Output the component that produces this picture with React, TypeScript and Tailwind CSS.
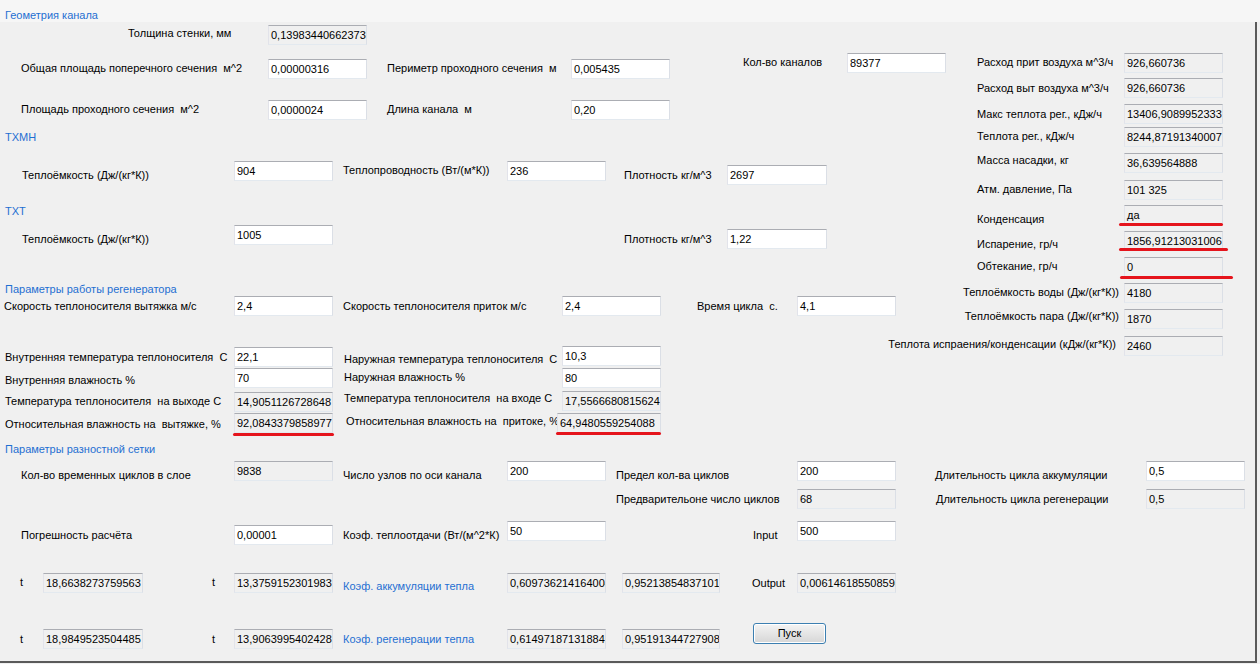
import React from "react";

function Box({ v, ro, cls, children }: { v: string; ro?: boolean; cls?: string; children?: React.ReactNode }) {
  return (
    <div
      className={`${cls ?? ""} relative h-[20px] shrink-0 border border-[#dbdfe6] border-t-[#abadb3] border-l-[#e2e3ea] border-b-[#e3e9ef] ${
        ro ? "bg-[#f0f0f0]" : "bg-white"
      }`}
    >
      <div className="overflow-hidden whitespace-nowrap pl-[2px] leading-[18px] h-[18px]">{v}</div>
      {children}
    </div>
  );
}

function L({ cls, children, blue }: { cls: string; children: React.ReactNode; blue?: boolean }) {
  return (
    <div className={`${cls} shrink-0 whitespace-pre leading-[13px] h-[13px] ${blue ? "text-[#1f6fd2]" : ""}`}>
      {children}
    </div>
  );
}

function Red({ cls }: { cls: string }) {
  return <div className={`${cls} absolute h-[3px] rounded-full bg-[#e5141c]`} />;
}

function RLeft({ h, lt, label, v, children }: { h: string; lt: string; label: string; v: string; children?: React.ReactNode }) {
  return (
    <div className={`${h} flex shrink-0`}>
      <L cls={`w-[167px] pl-[20px] ${lt}`}>{label}</L>
      <Box ro cls="w-[99px]" v={v}>
        {children}
      </Box>
    </div>
  );
}

function RRight({ h, lt, pr, label, v }: { h: string; lt: string; pr: string; label: string; v: string }) {
  return (
    <div className={`${h} flex shrink-0`}>
      <div className={`w-[167px] shrink-0 flex justify-end ${pr} ${lt}`}>
        <div className="shrink-0 whitespace-pre leading-[13px] h-[13px]">{label}</div>
      </div>
      <Box ro cls="w-[99px]" v={v} />
    </div>
  );
}

export default function App() {
  return (
    <div className="relative w-[1260px] h-[664px] overflow-hidden bg-[#f0f0f0] text-black text-[11px] leading-[13px] font-['Liberation_Sans','Arial',sans-serif]">
      {/* top band */}
      <div className="h-[22px] bg-[#f6f6f6] pl-[5px] pt-[9px]">
        <L blue cls="">Геометрия канала</L>
      </div>

      <div className="flex">
        {/* left part */}
        <div className="w-[957px] shrink-0 flex flex-col">
          <div className="flex h-[30px] shrink-0">
            <L cls="ml-[128px] w-[140px] mt-[5px]">Толщина стенки, мм</L>
            <Box ro cls="w-[99px] mt-[3px]" v="0,139834406623738" />
          </div>
          <div className="flex h-[48px] shrink-0">
            <L cls="ml-[21px] w-[247px] mt-[10px]">Общая площадь поперечного сечения  м^2</L>
            <Box cls="w-[99px] mt-[7px]" v="0,00000316" />
            <L cls="ml-[20px] w-[184px] mt-[10px]">Периметр проходного сечения  м</L>
            <Box cls="w-[99px] mt-[7px]" v="0,005435" />
            <L cls="ml-[73px] w-[104px] mt-[4px]">Кол-во каналов</L>
            <Box cls="w-[99px] mt-[1px]" v="89377" />
          </div>
          <div className="flex h-[28px] shrink-0">
            <L cls="ml-[21px] w-[247px] mt-[3px]">Площадь проходного сечения  м^2</L>
            <Box cls="w-[99px]" v="0,0000024" />
            <L cls="ml-[20px] w-[184px] mt-[3px]">Длина канала  м</L>
            <Box cls="w-[99px]" v="0,20" />
          </div>
          <div className="flex h-[27px] shrink-0">
            <L blue cls="ml-[5px] mt-[3px]">ТХМН</L>
          </div>
          <div className="flex h-[45px] shrink-0">
            <L cls="ml-[22px] w-[212px] mt-[14px]">Теплоёмкость (Дж/(кг*К))</L>
            <Box cls="w-[99px] mt-[6px]" v="904" />
            <L cls="ml-[10px] w-[164px] mt-[9px]">Теплопроводность (Вт/(м*К))</L>
            <Box cls="w-[99px] mt-[6px]" v="236" />
            <L cls="ml-[18px] w-[103px] mt-[14px]">Плотность кг/м^3</L>
            <Box cls="w-[100px] mt-[10px]" v="2697" />
          </div>
          <div className="flex h-[22px] shrink-0">
            <L blue cls="ml-[5px] mt-[5px]">ТХТ</L>
          </div>
          <div className="flex h-[38px] shrink-0">
            <L cls="ml-[22px] w-[212px] mt-[11px]">Теплоёмкость (Дж/(кг*К))</L>
            <Box cls="w-[99px] mt-[3px]" v="1005" />
            <L cls="ml-[291px] w-[103px] mt-[11px]">Плотность кг/м^3</L>
            <Box cls="w-[100px] mt-[7px]" v="1,22" />
          </div>
          <div className="flex h-[36px] shrink-0">
            <L blue cls="ml-[5px] mt-[23px]">Параметры работы регенератора</L>
          </div>
          <div className="flex h-[50px] shrink-0">
            <L cls="ml-[4px] w-[230px] mt-[4px]">Скорость теплоносителя вытяжка м/с</L>
            <Box cls="w-[99px]" v="2,4" />
            <L cls="ml-[10px] w-[219px] mt-[4px]">Скорость теплоносителя приток м/с</L>
            <Box cls="w-[99px]" v="2,4" />
            <L cls="ml-[36px] w-[100px] mt-[4px]">Время цикла  с.</L>
            <Box cls="w-[99px]" v="4,1" />
          </div>
          <div className="flex h-[22px] shrink-0">
            <L cls="ml-[5px] w-[229px] mt-[5px]">Внутренняя температура теплоносителя  С</L>
            <Box cls="w-[99px] mt-[1px]" v="22,1" />
            <L cls="ml-[11px] w-[218px] mt-[7px]">Наружная температура теплоносителя  С</L>
            <Box cls="w-[99px]" v="10,3" />
          </div>
          <div className="flex h-[23px] shrink-0">
            <L cls="ml-[5px] w-[229px] mt-[6px]">Внутренняя влажность %</L>
            <Box cls="w-[99px]" v="70" />
            <L cls="ml-[11px] w-[218px] mt-[3px]">Наружная влажность %</L>
            <Box cls="w-[99px]" v="80" />
          </div>
          <div className="flex h-[22px] shrink-0">
            <L cls="ml-[5px] w-[229px] mt-[4px]">Температура теплоносителя  на выходе С</L>
            <Box ro cls="w-[99px] mt-[1px]" v="14,9051126728648" />
            <L cls="ml-[11px] w-[218px] mt-[1px]">Температура теплоносителя  на входе С</L>
            <Box ro cls="w-[99px]" v="17,5566680815624" />
          </div>
          <div className="flex h-[27px] shrink-0">
            <L cls="ml-[5px] w-[229px] mt-[5px]">Относительная влажность на  вытяжке, %</L>
            <Box ro cls="w-[99px]" v="92,0843379858977">
              <Red cls="left-[-2px] top-[19px] w-[101px]" />
            </Box>
            <L cls="ml-[13px] w-[211px] mt-[2px]">Относительная влажность на  притоке, %</L>
            <Box ro cls="w-[104px]" v="64,9480559254088">
              <Red cls="left-[-2px] top-[18px] w-[105px]" />
            </Box>
          </div>
        </div>

        {/* right column */}
        <div className="w-[299px] shrink-0 flex flex-col">
          <div className="h-[31px] shrink-0" />
          <RLeft h="h-[25px]" lt="mt-[3px]" label="Расход прит воздуха м^3/ч" v="926,660736" />
          <RLeft h="h-[26px]" lt="mt-[4px]" label="Расход выт воздуха м^3/ч" v="926,660736" />
          <RLeft h="h-[23px]" lt="mt-[4px]" label="Макс теплота рег., кДж/ч" v="13406,9089952333" />
          <RLeft h="h-[26px]" lt="mt-[3px]" label="Теплота рег., кДж/ч" v="8244,87191340007" />
          <RLeft h="h-[27px]" lt="mt-[1px]" label="Масса насадки, кг" v="36,639564888" />
          <RLeft h="h-[25px]" lt="mt-[3px]" label="Атм. давление, Па" v="101 325" />
          <RLeft h="h-[26px]" lt="mt-[8px]" label="Конденсация" v="да">
            <Red cls="left-[-6px] top-[17px] w-[104px]" />
          </RLeft>
          <RLeft h="h-[26px]" lt="mt-[7px]" label="Испарение, гр/ч" v="1856,91213031006">
            <Red cls="left-[-6px] top-[16px] w-[109px]" />
          </RLeft>
          <RLeft h="h-[26px]" lt="mt-[3px]" label="Обтекание, гр/ч" v="0">
            <Red cls="left-[-5px] top-[18px] w-[113px]" />
          </RLeft>
          <RRight h="h-[26px]" lt="mt-[3px]" pr="pr-[5px]" label="Теплоёмкость воды (Дж/(кг*К))" v="4180" />
          <RRight h="h-[27px]" lt="mt-[1px]" pr="pr-[5px]" label="Теплоёмкость пара (Дж/(кг*К))" v="1870" />
          <RRight h="h-[20px]" lt="mt-[2px]" pr="pr-[8px]" label="Теплота испраения/конденсации (кДж/(кг*К))" v="2460" />
        </div>
      </div>

      {/* bottom area */}
      <div className="flex flex-col">
        <div className="flex h-[21px] shrink-0">
          <L blue cls="ml-[5px] mt-[3px]">Параметры разностной сетки</L>
        </div>
        <div className="flex h-[28px] shrink-0">
          <L cls="ml-[21px] w-[213px] mt-[8px]">Кол-во временных циклов в слое</L>
          <Box ro cls="w-[99px]" v="9838" />
          <L cls="ml-[10px] w-[164px] mt-[8px]">Число узлов по оси канала</L>
          <Box cls="w-[99px]" v="200" />
          <L cls="ml-[10px] w-[181px] mt-[8px]">Предел кол-ва циклов</L>
          <Box cls="w-[99px]" v="200" />
          <L cls="ml-[39px] w-[211px] mt-[8px]">Длительность цикла аккумуляции</L>
          <Box cls="w-[99px]" v="0,5" />
        </div>
        <div className="flex h-[32px] shrink-0">
          <L cls="ml-[616px] w-[181px] mt-[4px]">Предварительоне число циклов</L>
          <Box ro cls="w-[99px]" v="68" />
          <L cls="ml-[40px] w-[210px] mt-[4px]">Длительность цикла регенерации</L>
          <Box ro cls="w-[99px]" v="0,5" />
        </div>
        <div className="flex h-[52px] shrink-0">
          <L cls="ml-[21px] w-[213px] mt-[8px]">Погрешность расчёта</L>
          <Box cls="w-[99px] mt-[4px]" v="0,00001" />
          <L cls="ml-[10px] w-[164px] mt-[8px]">Коэф. теплоотдачи (Вт/(м^2*К)</L>
          <Box cls="w-[99px]" v="50" />
          <L cls="ml-[147px] w-[44px] mt-[8px]">Input</L>
          <Box cls="w-[99px]" v="500" />
        </div>
        <div className="flex h-[50px] shrink-0">
          <L cls="ml-[20px] w-[23px] mt-[3px]">t</L>
          <Box ro cls="w-[100px]" v="18,6638273759563" />
          <L cls="ml-[69px] w-[22px] mt-[3px]">t</L>
          <Box ro cls="w-[99px]" v="13,3759152301983" />
          <L blue cls="ml-[10px] w-[164px] mt-[7px]">Коэф. аккумуляции тепла</L>
          <Box ro cls="w-[99px]" v="0,609736214164004" />
          <Box ro cls="ml-[16px] w-[98px]" v="0,952138548371013" />
          <L cls="ml-[32px] w-[45px] mt-[4px]">Output</L>
          <Box ro cls="w-[99px]" v="0,00614618550859432" />
        </div>
        <div className="flex h-[41px] shrink-0">
          <L cls="ml-[20px] w-[23px] mt-[10px]">t</L>
          <Box ro cls="w-[100px] mt-[6px]" v="18,9849523504485" />
          <L cls="ml-[69px] w-[22px] mt-[10px]">t</L>
          <Box ro cls="w-[99px] mt-[6px]" v="13,9063995402428" />
          <L blue cls="ml-[10px] w-[164px] mt-[10px]">Коэф. регенерации тепла</L>
          <Box ro cls="w-[99px] mt-[6px]" v="0,614971871318845" />
          <Box ro cls="ml-[16px] w-[98px] mt-[6px]" v="0,951913447279087" />
          <button className="ml-[33px] w-[73px] h-[21px] shrink-0 rounded-[3px] border border-[#3c7fb1] bg-gradient-to-b from-[#f4f4f4] to-[#d6d6d6] text-[11px] leading-[13px] text-black shadow-[inset_0_0_0_1px_#ffffff]">
            Пуск
          </button>
        </div>
      </div>

      {/* window frame edges */}
      <div className="absolute left-0 right-[4px] bottom-[1px] h-[2px] bg-[#5a5a5a]" />
      <div className="absolute top-[22px] bottom-[1px] right-[3px] w-[2px] bg-[#5a5a5a]" />
    </div>
  );
}
